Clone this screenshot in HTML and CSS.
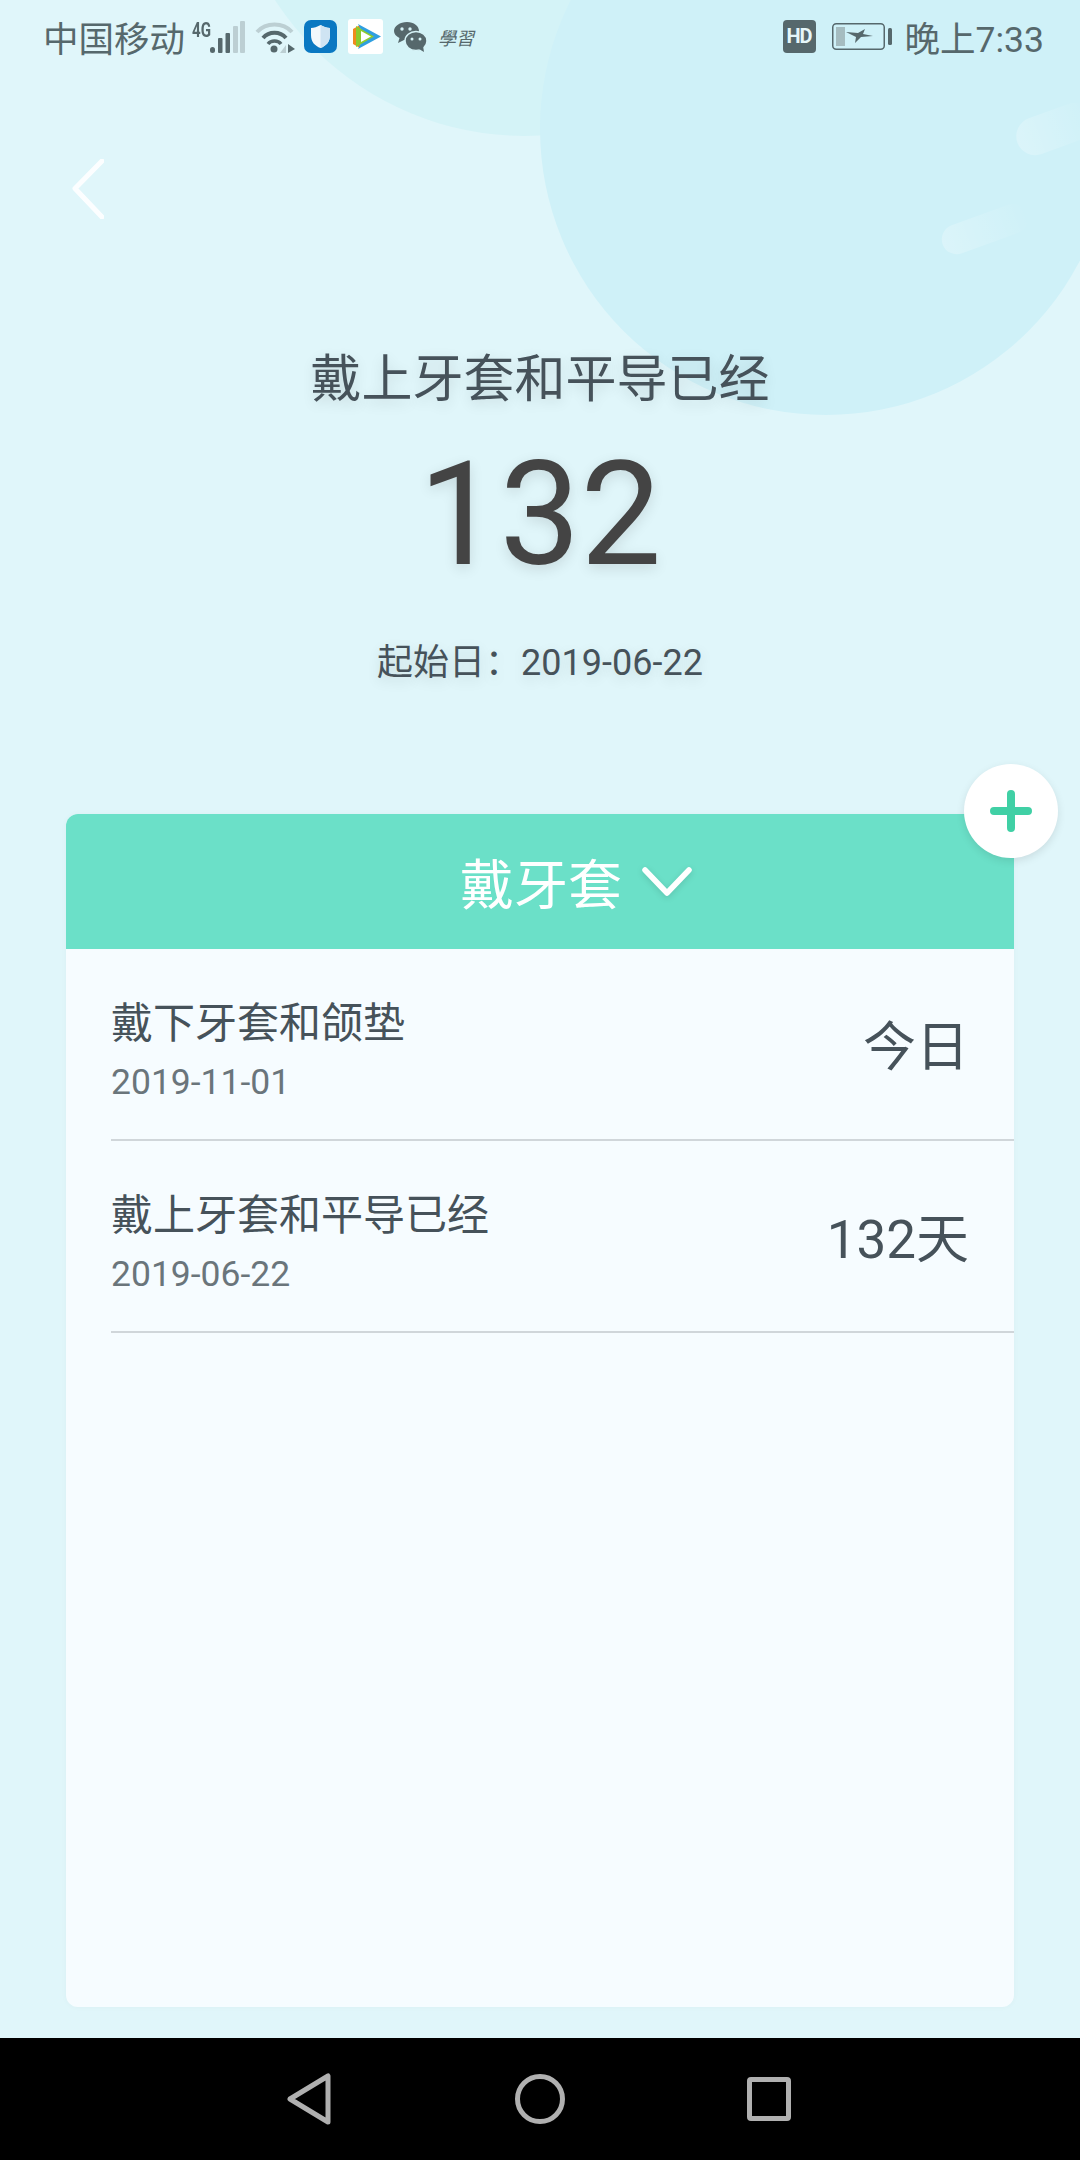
FILE: index.html
```html
<!DOCTYPE html>
<html lang="zh-CN">
<head>
    <meta charset="UTF-8">
    <meta name="viewport" content="width=device-width, initial-scale=1.0">
    <title>戴牙套</title>
    <link rel="stylesheet" href="styles.css">
</head>
<body>
    <div class="deco">
        <div class="circle circle-top"></div>
        <div class="circle circle-big"></div>
        <div class="streak streak-one"></div>
        <div class="streak streak-two"></div>
    </div>

    <div class="status-bar">
        <div class="status-left">
            <span class="carrier">中国移动</span>
            <span class="net">4G</span>
            <svg class="signal" width="35" height="32" viewBox="0 0 35 32">
                <rect x="0" y="26" width="5" height="6" rx="2.5" fill="#56686c"/>
                <rect x="8" y="17" width="4.5" height="15" rx="1" fill="#56686c"/>
                <rect x="15.5" y="12" width="4.5" height="20" rx="1" fill="#56686c"/>
                <rect x="23" y="5" width="5" height="27" rx="1" fill="#bccfd3"/>
                <rect x="30" y="0" width="5" height="32" rx="1" fill="#bccfd3"/>
            </svg>
            <svg class="wifi" width="40" height="32" viewBox="0 0 40 32">
                <path d="M2 11 C11 1 28 1 37 11" fill="none" stroke="#bccfd3" stroke-width="4"/>
                <path d="M8 17 C14 10 25 10 31 17" fill="none" stroke="#56686c" stroke-width="4"/>
                <path d="M13 23 C16 19 23 19 26 23" fill="none" stroke="#56686c" stroke-width="3.5"/>
                <circle cx="19" cy="28" r="3.5" fill="#56686c"/>
                <path d="M31 24 L31 32 L25 32 Z" fill="#bccfd3"/>
                <path d="M33 23 L40 28 L33 32 Z" fill="#56686c"/>
            </svg>
            <svg class="app-shield" width="33" height="33" viewBox="0 0 33 33">
                <rect width="33" height="33" rx="7" fill="#0a78c2"/>
                <path d="M16.5 5 C20 7 23 8 26 8 L26 15 C26 22 22 26 16.5 28 C11 26 7 22 7 15 L7 8 C10 8 13 7 16.5 5 Z" fill="#f2f8fc"/>
                <path d="M16.5 5 C20 7 23 8 26 8 L26 15 C26 22 22 26 16.5 28 Z" fill="#cfe4f3"/>
            </svg>
            <svg class="app-video" width="35" height="35" viewBox="0 0 35 35">
                <rect width="35" height="35" rx="3" fill="#ffffff"/>
                <path d="M5 10 L12 6 L12 29 L5 25 Z" fill="#f08a1d"/>
                <path d="M10 5 L33 17.5 L10 30 L16 17.5 Z" fill="#2f9fe0"/>
                <path d="M8 7 L26 17.5 L8 28 Z" fill="#8ccb2e"/>
                <path d="M13 12 L23 17.5 L13 23 Z" fill="#ffffff"/>
            </svg>
            <svg class="app-wechat" width="33" height="30" viewBox="0 0 33 30">
                <path d="M13 0 C20 0 25 4 25 9 C25 14 20 18 13 18 L10 18 L4 21 L5.500 16 C2 14 0 12 0 9 C0 4 6 0 13 0 Z" fill="#56686c"/>
                <ellipse cx="22" cy="19" rx="11" ry="9.500" fill="#56686c" stroke="#d6f3f7" stroke-width="1.500"/>
                <path d="M25 27 L30 30 L29 24 Z" fill="#56686c"/>
                <circle cx="8" cy="7" r="1.700" fill="#d6f3f7"/>
                <circle cx="16" cy="7" r="1.700" fill="#d6f3f7"/>
                <circle cx="18" cy="17" r="1.500" fill="#d6f3f7"/>
                <circle cx="26" cy="17" r="1.500" fill="#d6f3f7"/>
            </svg>
            <span class="app-text">學習</span>
        </div>
        <div class="status-right">
            <span class="hd">HD</span>
            <svg class="battery" width="60" height="27" viewBox="0 0 60 27">
                <rect x="0.750" y="0.750" width="51.500" height="25.500" rx="3.500" fill="none" stroke="#56686c" stroke-width="1.500"/>
                <rect x="4" y="4" width="9" height="19" fill="#a5bcc0"/>
                <path d="M14 9 L26 10 L33 6 L31 11 L41 13 L29 14 L23 20 L24 14 Z" fill="#56686c"/>
                <rect x="56" y="5" width="4" height="17" rx="1.500" fill="#56686c"/>
            </svg>
            <span class="clock">晚上7:33</span>
        </div>
    </div>

    <svg class="back" width="32" height="60" viewBox="0 0 32 60">
        <path d="M30 2 L3 29.500 L30 58" fill="none" stroke="#ffffff" stroke-opacity="0.9" stroke-width="5" stroke-linecap="round" stroke-linejoin="round"/>
    </svg>

    <div class="hero">
        <div class="hero-title">戴上牙套和平导已经</div>
        <div class="hero-count">132</div>
        <div class="hero-date">起始日：2019-06-22</div>
    </div>

    <div class="card">
        <div class="card-head">
            <span class="card-name">戴牙套</span>
            <svg class="chevron" width="50" height="32" viewBox="0 0 50 32">
                <path d="M3 4 L25 27 L47 4" fill="none" stroke="#ffffff" stroke-width="5.500" stroke-linecap="round" stroke-linejoin="round"/>
            </svg>
        </div>
        <div class="row">
            <div class="row-text">
                <div class="row-title">戴下牙套和颌垫</div>
                <div class="row-date">2019-11-01</div>
            </div>
            <div class="row-value">今日</div>
        </div>
        <div class="row">
            <div class="row-text">
                <div class="row-title">戴上牙套和平导已经</div>
                <div class="row-date">2019-06-22</div>
            </div>
            <div class="row-value">132天</div>
        </div>
        <div class="add-btn">
            <svg width="42" height="42" viewBox="0 0 42 42">
                <path d="M4 21 L38 21 M21 4 L21 38" fill="none" stroke="#40d0a5" stroke-width="8" stroke-linecap="round"/>
            </svg>
        </div>
    </div>

    <div class="nav-bar">
        <svg width="44" height="52" viewBox="0 0 44 52">
            <path d="M3 26 L41 3 L41 49 Z" fill="none" stroke="#b0b0b0" stroke-width="5" stroke-linejoin="round"/>
        </svg>
        <div class="nav-circle"></div>
        <div class="nav-square"></div>
    </div>
</body>
</html>
```

FILE: styles.css
```css
* {
    margin: 0;
    padding: 0;
    box-sizing: border-box;
}

body {
    position: relative;
    width: 1080px;
    height: 2160px;
    overflow: hidden;
    display: flex;
    flex-direction: column;
    background: #e0f6fa;
    font-family: Roboto, 'Noto Sans CJK SC', sans-serif;
}

/* background shapes */
.deco {
    position: absolute;
    top: 0;
    left: 0;
    width: 1080px;
    height: 500px;
    overflow: hidden;
}

.circle {
    position: absolute;
    border-radius: 50%;
}

.circle-top {
    left: 227px;
    top: -460px;
    width: 596px;
    height: 596px;
    background: #d4f3f7;
}

.circle-big {
    left: 540px;
    top: -157px;
    width: 572px;
    height: 572px;
    background: #cff1f8;
}

.streak {
    position: absolute;
    border-radius: 20px;
    transform: rotate(-20deg);
    background: linear-gradient(90deg, rgba(255, 255, 255, 0.25), rgba(255, 255, 255, 0));
}

.streak-one {
    left: 940px;
    top: 214px;
    width: 90px;
    height: 30px;
}

.streak-two {
    left: 1015px;
    top: 110px;
    width: 80px;
    height: 38px;
}

/* status bar */
.status-bar {
    position: relative;
    height: 75px;
    padding: 0 36px 2px 43px;
    display: flex;
    justify-content: space-between;
    align-items: center;
    color: #56686c;
    font-size: 35.500px;
}

.status-left,
.status-right {
    display: flex;
    align-items: center;
}

.net {
    display: inline-block;
    width: 18px;
    margin-left: 7px;
    margin-bottom: 13px;
    font-size: 21px;
    font-weight: 700;
    line-height: 18px;
    transform: scaleX(0.72);
    transform-origin: left center;
}

.wifi {
    margin-left: 10px;
}

.app-shield {
    margin-left: 9px;
}

.app-video {
    margin-left: 11px;
}

.app-wechat {
    margin-left: 11px;
}

.app-text {
    margin-left: 11px;
    font-size: 18px;
    font-style: italic;
    font-family: 'Noto Sans CJK TC', sans-serif;
}

.hd {
    width: 33px;
    height: 33px;
    border-radius: 4px;
    background: #56686c;
    color: #e6f7fa;
    font-size: 20px;
    font-weight: 700;
    line-height: 33px;
    text-align: center;
    letter-spacing: -1px;
}

.battery {
    margin: 0 13px 0 16px;
}

/* top section */
.back {
    position: relative;
    display: block;
    margin: 84px 0 0 72px;
}

.hero {
    position: relative;
    padding: 131px 0 129px;
    text-align: center;
    color: #46525a;
    text-shadow: 0 4px 14px rgba(0, 0, 0, 0.12);
}

.hero-title {
    font-size: 51px;
    line-height: 60px;
}

.hero-count {
    margin-top: 20px;
    color: #444444;
    font-size: 144px;
    line-height: 170px;
}

.hero-date {
    margin-top: 41px;
    font-size: 36px;
    line-height: 44px;
}

/* list card */
.card {
    position: relative;
    width: 948px;
    height: 1193px;
    margin: 0 0 31px 66px;
    border-radius: 12px;
    background: #f6fcff;
    box-shadow: 0 0 6px rgba(0, 0, 0, 0.03);
}

.card-head {
    height: 135px;
    padding-left: 72px;
    display: flex;
    justify-content: center;
    align-items: center;
    gap: 20px;
    border-radius: 12px 12px 0 0;
    background: #6be0c8;
    color: #ffffff;
}

.card-name {
    font-size: 54px;
}

.chevron {
    filter: drop-shadow(0 2px 3px rgba(0, 0, 0, 0.12));
}

.row {
    height: 192px;
    margin-left: 45px;
    padding-right: 45px;
    display: flex;
    justify-content: space-between;
    align-items: center;
    border-bottom: 2px solid #d0d6da;
}

.row-text {
    padding-top: 10px;
}

.row-title {
    color: #46525a;
    font-size: 42px;
    line-height: 56px;
}

.row-date {
    margin-top: 9px;
    color: #6a757b;
    font-size: 35.500px;
    line-height: 42px;
}

.row-value {
    margin-bottom: 2px;
    color: #46525a;
    font-size: 53px;
}

.add-btn {
    position: absolute;
    top: -50px;
    right: -44px;
    width: 94px;
    height: 94px;
    display: flex;
    justify-content: center;
    align-items: center;
    border-radius: 50%;
    background: #ffffff;
    box-shadow: 0 3px 8px rgba(0, 0, 0, 0.1);
}

/* navigation bar */
.nav-bar {
    position: relative;
    height: 122px;
    padding-left: 287px;
    display: flex;
    align-items: center;
    gap: 184px;
    background: #000000;
}

.nav-circle {
    width: 50px;
    height: 50px;
    border: 5px solid #b0b0b0;
    border-radius: 50%;
}

.nav-square {
    width: 44px;
    height: 44px;
    margin-left: -2px;
    border: 5px solid #b0b0b0;
    border-radius: 4px;
}
```
